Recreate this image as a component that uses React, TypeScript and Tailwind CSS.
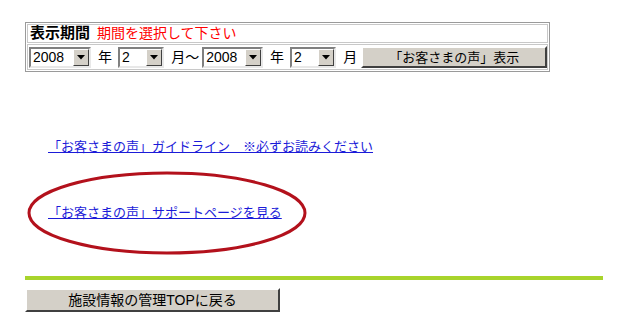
import React from "react";

// Fake classic Windows select box
const FakeSelect = ({ value, width }: { value: string; width: string }) => (
  <div
    className={`flex h-[21px] items-stretch border-2 border-t-[#808080] border-l-[#808080] border-b-[#e8e8e8] border-r-[#e8e8e8] bg-white ${width}`}
  >
    <span className="flex-1 pl-[2px] text-[14px] leading-[17px] text-black">{value}</span>
    <span className="flex w-[16px] items-center justify-center border border-t-white border-l-white border-b-[#404040] border-r-[#404040] bg-[#d4d0c8]">
      <svg width="8" height="5" viewBox="0 0 8 5">
        <polygon points="0,0 8,0 4,4.5" fill="#000" />
      </svg>
    </span>
  </div>
);

export default function App() {
  return (
    <div
      className="relative h-[330px] w-[620px] bg-white pl-[25px] pt-[22px]"
      style={{ fontFamily: '"Liberation Sans", "Noto Sans CJK JP", sans-serif' }}
    >
      {/* period selection table */}
      <div className="w-[525px] border border-[#9a9a9a] p-[1px]">
        <div className="flex h-[19px] items-center gap-[7px] border border-[#c8c8c8] pl-[2px] text-[14px]">
          <span className="text-[15px] font-bold text-black">表示期間</span>
          <span className="text-[#ff0000]">期間を選択して下さい</span>
        </div>
        <div className="mt-[1px] flex h-[26px] items-center border border-[#c8c8c8] pl-[1px] text-[14px] text-black">
          <FakeSelect value="2008" width="w-[63px]" />
          <span className="ml-[7px] mr-[6px]">年</span>
          <FakeSelect value="2" width="w-[47px]" />
          <span className="ml-[7px] mr-[3px]">月〜</span>
          <FakeSelect value="2008" width="w-[62px]" />
          <span className="ml-[7px] mr-[6px]">年</span>
          <FakeSelect value="2" width="w-[47px]" />
          <span className="ml-[7px] mr-[4px]">月</span>
          <button className="h-[22px] w-[189px] border-2 border-t-white border-l-white border-b-[#404040] border-r-[#404040] bg-[#d4d0c8] text-[13px] text-black">
            「お客さまの声」表示
          </button>
        </div>
      </div>

      {/* links */}
      <div className="flex flex-col pl-[23px] pt-[65px] text-[13px]">
        <a href="#" className="text-[#1b1bd8] underline">
          「お客さまの声」ガイドライン　※必ずお読みください
        </a>
        <a href="#" className="mt-[46px] text-[#1b1bd8] underline">
          「お客さまの声」サポートページを見る
        </a>
      </div>

      {/* red marker ellipse over the support link */}
      <svg
        className="absolute left-[26px] top-[170px]"
        width="284"
        height="86"
        viewBox="0 0 284 86"
      >
        <ellipse cx="141" cy="43" rx="138" ry="40" fill="none" stroke="#b3111c" strokeWidth="3" />
      </svg>

      {/* green divider */}
      <div className="mt-[54px] h-[4px] w-[578px] bg-[#a8d42c]" />

      {/* back button */}
      <button className="mt-[8px] h-[24px] w-[255px] border-2 border-t-white border-l-white border-b-[#404040] border-r-[#404040] bg-[#d4d0c8] text-[14px] text-black">
        施設情報の管理TOPに戻る
      </button>
    </div>
  );
}
